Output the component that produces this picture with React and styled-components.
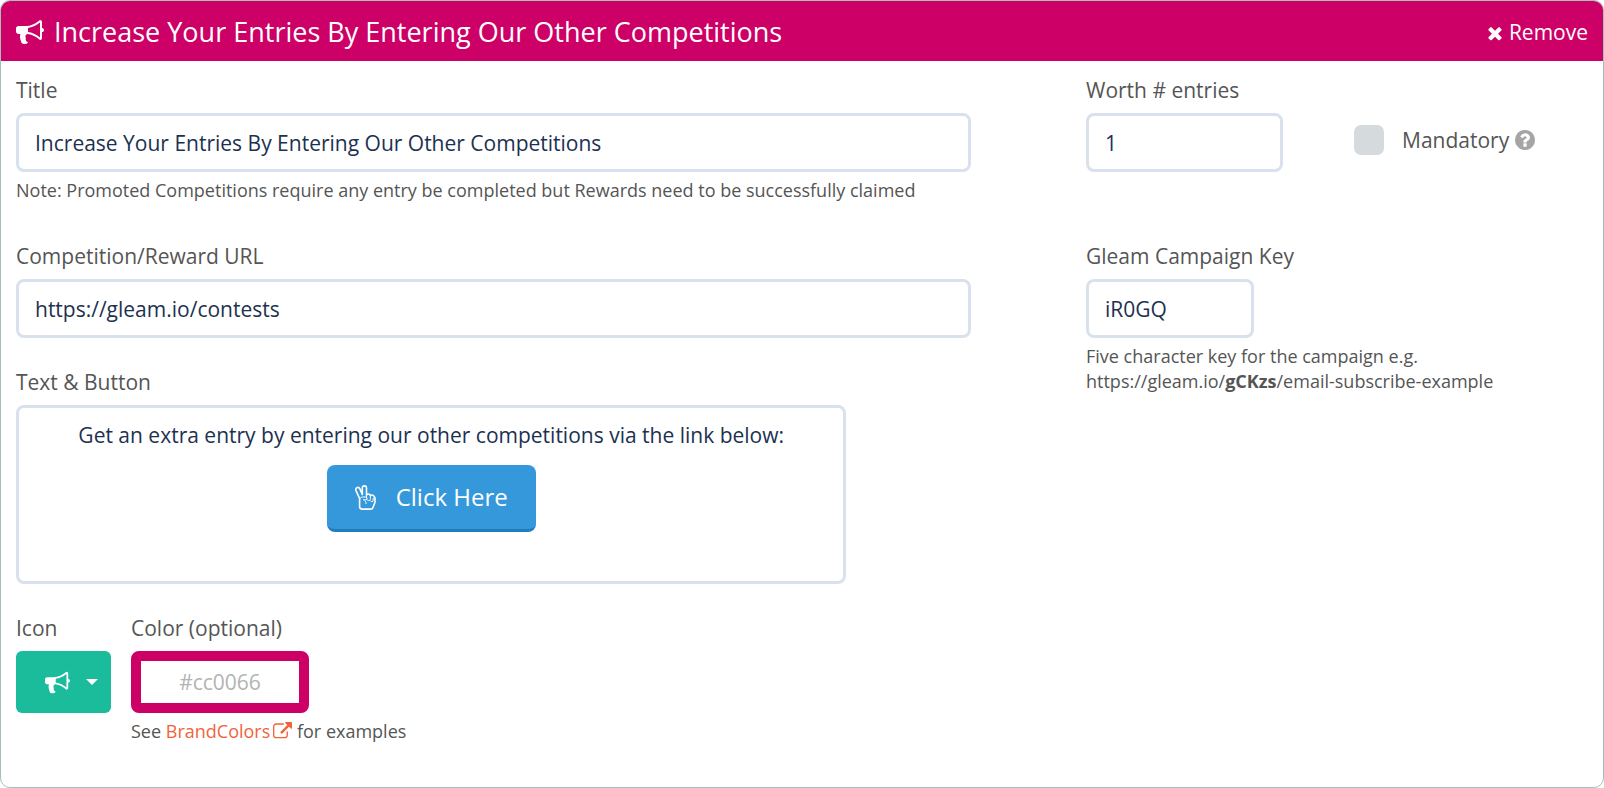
import React, { useState } from "react";
import styled, { createGlobalStyle } from "styled-components";

const GlobalStyle = createGlobalStyle`
  * {
    box-sizing: border-box;
  }

  body {
    margin: 0;
    background: #fff;
    color: #555;
    font-family: "Open Sans", "Noto Sans", sans-serif;
    font-size: 21px;
    line-height: 30px;
  }
`;

const Card = styled.form`
  min-height: 100vh;
  border: 1px solid #a3c2b5;
  border-radius: 10px;
  overflow: hidden;
  padding-bottom: 40px;
`;

const Header = styled.header`
  display: flex;
  align-items: center;
  justify-content: space-between;
  height: 60px;
  padding: 2px 15px 0;
  background: #cc0066;
  color: #fff;
`;

const Heading = styled.h1`
  display: flex;
  align-items: center;
  gap: 10px;
  margin: 0;
  font-size: 27px;
  font-weight: 400;
  line-height: 40px;
`;

const RemoveButton = styled.button`
  display: flex;
  align-items: center;
  gap: 4px;
  padding: 0;
  border: 0;
  background: none;
  color: #fff;
  font: inherit;
  cursor: pointer;
`;

const Columns = styled.div`
  display: grid;
  grid-template-columns: 2fr 1fr;
  padding-top: 14px;
`;

const Column = styled.div`
  display: flex;
  flex-direction: column;
  padding: 0 15px;

  & + & {
    padding-left: 17px;
  }
`;

const Field = styled.div`
  display: flex;
  flex-direction: column;
  align-items: flex-start;
  width: ${(props) => props.$width || "auto"};
  min-height: ${(props) => props.$minHeight || "0"};
  margin-bottom: ${(props) => props.$space || "0"};
`;

const Label = styled.label`
  margin-bottom: 8px;
`;

const TextInput = styled.input`
  width: ${(props) => props.$width || "100%"};
  height: 59px;
  padding: 0 16px;
  border: 3px solid #d9e2ec;
  border-radius: 8px;
  background: #fff;
  color: #1c3150;
  font: inherit;
`;

const Help = styled.p`
  margin: 6px 0 0;
  font-size: 18px;
  line-height: 25px;
`;

const Row = styled.div`
  display: flex;
  gap: ${(props) => props.$gap || "20px"};
`;

const MandatoryLabel = styled.label`
  display: flex;
  align-items: center;
  height: 58px;
  margin-top: 36px;
`;

const Checkbox = styled.input`
  appearance: none;
  width: 30px;
  height: 30px;
  margin: 0 18px 0 0;
  border-radius: 7px;
  background: #d5dadd;

  &:checked {
    background: #1abc9c;
  }
`;

const HelpIcon = styled.span`
  display: flex;
  margin-left: 6px;
  color: #a5a5a5;
`;

const Editor = styled.div`
  display: flex;
  flex-direction: column;
  align-items: center;
  gap: 15px;
  width: 100%;
  min-height: 179px;
  padding: 12px 16px;
  border: 3px solid #d9e2ec;
  border-radius: 8px;
  color: #1c3150;
`;

const EditorText = styled.p`
  margin: 0;
`;

const ClickButton = styled.button`
  display: flex;
  align-items: center;
  gap: 20px;
  height: 67px;
  padding: 0 28px;
  border: 0;
  border-bottom: 3px solid #217dbb;
  border-radius: 8px;
  background: #3498db;
  color: #fff;
  font: inherit;
  font-size: 24px;
`;

const IconButton = styled.button`
  display: flex;
  align-items: center;
  justify-content: flex-end;
  gap: 16px;
  width: 95px;
  height: 62px;
  padding: 0 13px;
  border: 0;
  border-radius: 6px;
  background: #1abc9c;
  color: #fff;
`;

const Caret = styled.span`
  border: 6px solid transparent;
  border-top-color: #fff;
  border-bottom: 0;
`;

const ColorInput = styled.input`
  width: 178px;
  height: 62px;
  border: 10px solid #cc0066;
  border-radius: 8px;
  font: inherit;
  text-align: center;

  &::placeholder {
    color: #b3b3b3;
    opacity: 1;
  }
`;

const Link = styled.a`
  color: #f0643c;
  text-decoration: none;

  svg {
    margin-left: 3px;
    vertical-align: -3px;
  }
`;

function Bullhorn({ size }) {
  return (
    <svg width={size} height={size} viewBox="0 0 1792 1792" fill="currentColor" aria-hidden="true">
      <path d="M1664 640q53 0 90.500 37.500t37.500 90.500-37.500 90.500-90.500 37.500v384q0 52-38 90t-90 38q-417-347-812-380-58 19-91 66t-31 100.500 40 92.500q-20 33-23 65.500t6 58 33.500 55 48 50 61.500 50.500q-29 58-111.500 83t-168.500 11.500-132-55.500q-7-23-29.500-87.500t-32-94.500-23-89-15-101 3.500-98.500 22-110.500h-122q-66 0-113-47t-47-113v-192q0-66 47-113t113-47h480q435 0 896-384 52 0 90 38t38 90v384zm-128 604v-954q-394 302-768 343v270q377 42 768 341z" />
    </svg>
  );
}

function Cross() {
  return (
    <svg width="20" height="20" viewBox="0 -90 1792 1792" fill="currentColor" aria-hidden="true">
      <path d="M1490 1322q0 40-28 68l-136 136q-28 28-68 28t-68-28l-294-294-294 294q-28 28-68 28t-68-28l-136-136q-28-28-28-68t28-68l294-294-294-294q-28-28-28-68t28-68l136-136q28-28 68-28t68 28l294 294 294-294q28-28 68-28t68 28l136 136q28 28 28 68t-28 68l-294 294 294 294q28 28 28 68z" />
    </svg>
  );
}

function Question() {
  return (
    <svg width="20" height="20" viewBox="128 128 1536 1536" fill="currentColor" aria-hidden="true">
      <path d="M1024 1376v-192q0-14-9-23t-23-9h-192q-14 0-23 9t-9 23v192q0 14 9 23t23 9h192q14 0 23-9t9-23zm256-672q0-88-55.500-163t-138.500-116-170-41q-243 0-371 213-15 24 8 42l132 100q7 6 19 6 16 0 25-12 53-68 86-92 34-24 86-24 48 0 85.500 26t37.500 59q0 38-20 61t-68 45q-63 28-115.500 86.500t-52.500 125.500v36q0 14 9 23t23 9h192q14 0 23-9t9-23q0-19 21.500-49.500t54.500-49.500q32-18 49-28.500t46-35 44.500-48 28-60.500 12.500-81zm384 192q0 209-103 385.500t-279.500 279.500-385.500 103-385.500-103-279.500-279.500-103-385.500 103-385.500 279.500-279.500 385.500-103 385.500 103 279.500 279.500 103 385.500z" />
    </svg>
  );
}

function ExternalLink() {
  return (
    <svg width="19" height="19" viewBox="0 0 1792 1792" fill="currentColor" aria-hidden="true">
      <path d="M1408 928v320q0 119-84.500 203.500t-203.500 84.500h-832q-119 0-203.500-84.500t-84.500-203.500v-832q0-119 84.500-203.500t203.500-84.500h704q14 0 23 9t9 23v64q0 14-9 23t-23 9h-704q-66 0-113 47t-47 113v832q0 66 47 113t113 47h832q66 0 113-47t47-113v-320q0-14 9-23t23-9h64q14 0 23 9t9 23zm384-864v512q0 26-19 45t-45 19-45-19l-176-176-652 652q-10 10-23 10t-23-10l-114-114q-10-10-10-23t10-23l652-652-176-176q-19-19-19-45t19-45 45-19h512q26 0 45 19t19 45z" />
    </svg>
  );
}

function PeaceHand() {
  return (
    <svg
      width="21"
      height="25"
      viewBox="0 0 21 25"
      fill="none"
      stroke="currentColor"
      strokeLinecap="round"
      strokeLinejoin="round"
      aria-hidden="true"
    >
      <path
        strokeWidth="1.600"
        d="M4.600 13.500 1 5.600C.4 3.900 1.200 2.800 2.300 2.500s2.100.3 2.600 1.400l2.400 5.600V3C7.300 1.600 8.200.9 9.400.9s2.100.8 2.100 2.100v7.200c.4-.9 1.200-1.300 2.100-1.200 1 .1 1.600.7 1.800 1.500 1.200-.7 2.400-.5 3.300.3.900.7 1.300 1.600 1.300 2.800v3.200c0 1.600-1.300 3.200-1.700 4.800-.3 1.400-1 2.500-2.600 2.500H7.200c-1.500 0-2.600-1.100-2.600-2.500z"
      />
      <path
        strokeWidth="1"
        d="M4.900 13.600c.7-1.200 1.600-1.600 2.700-1.600h3c1.900 0 1.900 2.800 0 2.800H8.400c1.800.5 2.700 1.600 2.700 3.700M11.500 10.200v2.600M15.400 10.500v3.200c0 2.400-3.200 2.600-3.600.6M18.200 13.200v2c0 1.800-2.400 2-3 .5"
      />
    </svg>
  );
}

export default function App() {
  const [title, setTitle] = useState("Increase Your Entries By Entering Our Other Competitions");
  const [url, setUrl] = useState("https://gleam.io/contests");
  const [worth, setWorth] = useState("1");
  const [campaignKey, setCampaignKey] = useState("iR0GQ");

  return (
    <>
      <GlobalStyle />
      <Card>
        <Header>
          <Heading>
            <Bullhorn size={28} />
            {title}
          </Heading>
          <RemoveButton type="button">
            <Cross />
            Remove
          </RemoveButton>
        </Header>

        <Columns>
          <Column>
            <Field $width="92%" $minHeight="166px">
              <Label htmlFor="title">Title</Label>
              <TextInput id="title" value={title} onChange={(e) => setTitle(e.target.value)} />
              <Help>Note: Promoted Competitions require any entry be completed but Rewards need to be successfully claimed</Help>
            </Field>

            <Field $width="92%" $space="29px">
              <Label htmlFor="url">Competition/Reward URL</Label>
              <TextInput id="url" value={url} onChange={(e) => setUrl(e.target.value)} />
            </Field>

            <Field $width="80%" $space="29px">
              <Label as="span">Text &amp; Button</Label>
              <Editor>
                <EditorText>Get an extra entry by entering our other competitions via the link below:</EditorText>
                <ClickButton type="button">
                  <PeaceHand />
                  Click Here
                </ClickButton>
              </Editor>
            </Field>

            <Row>
              <Field>
                <Label htmlFor="icon">Icon</Label>
                <IconButton id="icon" type="button">
                  <Bullhorn size={25} />
                  <Caret />
                </IconButton>
              </Field>
              <Field>
                <Label htmlFor="color">Color (optional)</Label>
                <ColorInput id="color" placeholder="#cc0066" />
                <Help>
                  See{" "}
                  <Link href="#brandcolors">
                    BrandColors
                    <ExternalLink />
                  </Link>{" "}
                  for examples
                </Help>
              </Field>
            </Row>
          </Column>

          <Column>
            <Row $gap="71px">
              <Field $width="197px" $minHeight="166px">
                <Label htmlFor="worth">Worth # entries</Label>
                <TextInput id="worth" value={worth} onChange={(e) => setWorth(e.target.value)} />
              </Field>
              <MandatoryLabel>
                <Checkbox type="checkbox" />
                Mandatory
                <HelpIcon>
                  <Question />
                </HelpIcon>
              </MandatoryLabel>
            </Row>

            <Field>
              <Label htmlFor="key">Gleam Campaign Key</Label>
              <TextInput
                id="key"
                $width="168px"
                value={campaignKey}
                onChange={(e) => setCampaignKey(e.target.value)}
              />
              <Help>
                Five character key for the campaign e.g.
                <br />
                https://gleam.io/<b>gCKzs</b>/email-subscribe-example
              </Help>
            </Field>
          </Column>
        </Columns>
      </Card>
    </>
  );
}
